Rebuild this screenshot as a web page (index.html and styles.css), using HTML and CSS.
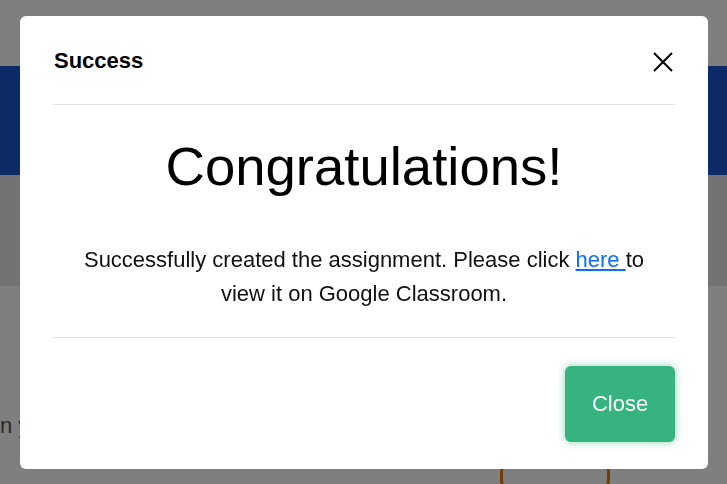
FILE: index.html
```html
<!DOCTYPE html>
<html>
<head>
<meta charset="utf-8">
<link rel="stylesheet" href="styles.css">
</head>
<body>
<div class="page">
  <div class="top"></div>
  <div class="band"></div>
  <div class="gray"></div>
  <div class="content">
    <p class="bg-text">in your</p>
    <div class="bg-btn-row"><span class="bg-btn"></span></div>
  </div>
</div>
<div class="overlay"></div>
<div class="modal" role="dialog">
  <div class="modal-header">
    <h5 class="modal-title">Success</h5>
    <button class="x-btn" aria-label="Close">
      <svg width="20" height="20" viewBox="0 0 20 20"><path d="M1 1 L19 19 M19 1 L1 19" stroke="#000" stroke-width="2" fill="none"/></svg>
    </button>
  </div>
  <div class="modal-body">
    <h1 class="congrats">Congratulations!</h1>
    <p class="msg">Successfully created the assignment. Please click <a href="#">here </a>to view it on Google Classroom.</p>
  </div>
  <div class="modal-footer">
    <button class="close-btn">Close</button>
  </div>
</div>
</body>
</html>
```
FILE: styles.css
```css
html, body { margin: 0; padding: 0; }
body { font-family: "Liberation Sans", Arial, sans-serif; background: #fff; overflow: hidden; }
.page { width: 727px; height: 484px; }
.top { height: 66px; background: #fff; }
.band { height: 109px; background: #1854cc; }
.gray { height: 111px; background: #e6e6e6; }
.content { height: 198px; background: #fff; }
.bg-text { margin: 0; padding: 127px 0 0 0; font-size: 22px; color: #555; text-indent: -5px; white-space: nowrap; }
.bg-btn-row { display: flex; padding-left: 500px; padding-top: 14px; }
.bg-btn { width: 104px; height: 40px; border: 3px solid #e4780a; border-radius: 20px; }
.overlay { position: fixed; inset: 0; background: rgba(0,0,0,0.5); }
.modal { position: fixed; left: 20px; top: 16px; width: 688px; height: 453px; background: #fff; border-radius: 6px; display: flex; flex-direction: column; }
.modal-header { height: 88px; margin: 0 33px; border-bottom: 1px solid #dee2e6; display: flex; align-items: center; justify-content: space-between; }
.modal-title { margin: 0; font-size: 22px; font-weight: bold; color: #000; padding: 2px 0 0 1px; }
.x-btn { background: none; border: 0; padding: 0; width: 20px; height: 20px; margin-right: 2px; margin-top: 3px; cursor: pointer; }
.x-btn svg { display: block; }
.modal-body { height: 232px; margin: 0 33px; border-bottom: 1px solid #dee2e6; text-align: center; }
.congrats { margin: 32px 0 0 0; font-size: 54.5px; font-weight: normal; line-height: 60px; color: #000; }
.msg { margin: 46px 0 0 0; font-size: 22px; line-height: 34px; color: #111; padding: 0 21px; }
.msg a { color: #0d6efd; text-decoration: underline; }
.modal-footer { flex: 1; margin: 0 33px; display: flex; justify-content: flex-end; align-items: flex-start; padding-top: 28px; }
.close-btn { width: 110px; height: 76px; background: #36b37e; color: #fff; border: 0; border-radius: 6px; font-family: "Liberation Sans", Arial, sans-serif; font-size: 22px; box-shadow: 0 0 8px rgba(54,179,126,0.6); }
```
